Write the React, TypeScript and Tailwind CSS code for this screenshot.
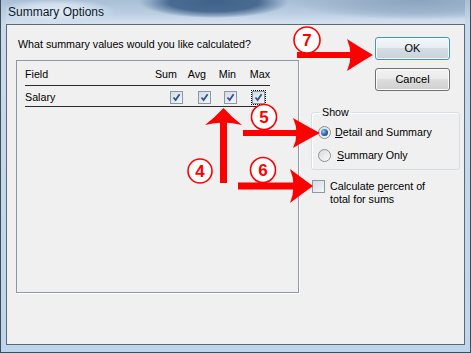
const font = "font-['Liberation_Sans',Arial,sans-serif]";

const Check = ({ checked = true, focused = false }: { checked?: boolean; focused?: boolean }) => (
  <span
    className={`flex h-[13px] w-[13px] shrink-0 items-center justify-center border border-[#8a98a8] bg-[linear-gradient(135deg,#d4dbe3,#f4f6f8)] ${
      focused ? 'outline outline-1 outline-dotted outline-offset-0 outline-black' : ''
    }`}
  >
    {checked && (
      <svg width="9" height="9" viewBox="0 0 9 9">
        <path d="M1.5 4.5 L3.6 7 L7.6 1.2" fill="none" stroke="#34538a" strokeWidth="1.8" />
      </svg>
    )}
  </span>
);

const Radio = ({ on = false }: { on?: boolean }) => (
  <span className="flex h-[13px] w-[13px] shrink-0 items-center justify-center rounded-full border border-[#8c8f94] bg-[linear-gradient(135deg,#d8dce0,#fafafa)]">
    {on && (
      <span className="h-[7px] w-[7px] rounded-full bg-[radial-gradient(circle_at_35%_35%,#8fc3f5,#1d59a8_60%,#0e3c7a)]" />
    )}
  </span>
);

const Button = ({ label, primary = false }: { label: string; primary?: boolean }) => (
  <button
    className={`h-[23px] w-[75px] rounded-[3px] border text-[11px] leading-none text-black shadow-[inset_0_0_0_1px_#fcfcfc] ${
      primary
        ? 'border-[#3c94d0] bg-[linear-gradient(180deg,#f3f7fa_0%,#e8eef3_45%,#d5dde4_50%,#c8d3dc_100%)]'
        : 'border-[#707070] bg-[linear-gradient(180deg,#f2f2f2_0%,#ebebeb_45%,#dddddd_50%,#cfcfcf_100%)]'
    }`}
  >
    {label}
  </button>
);

const arrowRight = (x1: number, bx: number, tx: number, cy: number, t: number, h: number) => {
  const mx = (bx + tx) / 2 + 2;
  return (
    <g fill="#ff0000">
      <rect x={x1} y={cy - t / 2} width={bx + 6 - x1} height={t} />
      <path
        d={`M${bx} ${cy - h} Q${mx} ${cy - h * 0.4} ${tx} ${cy} Q${mx} ${cy + h * 0.4} ${bx} ${cy + h} Q${bx + 7} ${cy} ${bx} ${cy - h} Z`}
      />
    </g>
  );
};

const Badge = ({ cx, cy, r, n }: { cx: number; cy: number; r: number; n: string }) => (
  <g>
    <circle cx={cx} cy={cy} r={r} fill="#fff" stroke="#ff0000" strokeWidth="1.6" />
    <text
      x={cx}
      y={cy + 6}
      textAnchor="middle"
      fontFamily="Liberation Sans, Arial, sans-serif"
      fontWeight="bold"
      fontSize="17"
      fill="#ff0000"
    >
      {n}
    </text>
  </g>
);

const App = () => {
  return (
    <div className={`relative h-[353px] w-[471px] overflow-hidden ${font}`}>
      <div className="flex h-full flex-col border-x border-b border-[#3e4d5c] bg-[linear-gradient(180deg,#a9bfd6_0px,#c9daeb_24px,#bed5ec_100%)] px-[5px] pb-[7px]">
        {/* title bar */}
        <div className="flex h-[24px] shrink-0 items-center bg-[radial-gradient(ellipse_60px_13px_at_50px_12px,#e2ebf5_0%,#d2dfec_60%,transparent_100%),radial-gradient(ellipse_75px_16px_at_208px_2px,#41628a_0%,#4a6b91_60%,#8aa5c2_85%,transparent_100%),radial-gradient(ellipse_130px_20px_at_410px_0px,#8aa3bf_0%,#9db4cc_60%,transparent_100%),linear-gradient(180deg,transparent_60%,#d3e0ee_100%)] pl-[2px]">
          <span className="text-[12px] leading-none text-[#0b1a2c]">Summary Options</span>
        </div>

        {/* client area */}
        <div className="flex flex-1 border border-[#5d6875] bg-[#f0f0f0] text-[10.7px] leading-[14px] text-black">
          <div className="ml-[9px] flex flex-col">
            <p className="mt-[12px] pl-[2px]">What summary values would you like calculated?</p>
            <div className="mt-[9px] h-[233px] w-[283px] border border-[#8d99a6] shadow-[1px_1px_0_#ffffff]">
              <div className="ml-[8px] w-[245px]">
                <div className="flex h-[25px] border-b border-[#2b2b2b] pt-[6px]">
                  <span className="w-[130px]">Field</span>
                  <span className="w-[33px]">Sum</span>
                  <span className="w-[31px]">Avg</span>
                  <span className="w-[31px]">Min</span>
                  <span>Max</span>
                </div>
                <div className="flex h-[21px] items-start border-b border-[#2b2b2b]">
                  <span className="mt-[4px] w-[145px]">Salary</span>
                  <span className="mt-[5px] flex">
                    <Check />
                    <span className="ml-[15px]">
                      <Check />
                    </span>
                    <span className="ml-[13px]">
                      <Check />
                    </span>
                    <span className="ml-[15px]">
                      <Check focused />
                    </span>
                  </span>
                </div>
              </div>
            </div>
          </div>

          <div className="ml-[12px] flex w-[149px] flex-col">
            <div className="mt-[12px] mr-[10px] flex flex-col items-end gap-[8px]">
              <Button label="OK" primary />
              <Button label="Cancel" />
            </div>
            <fieldset className="mt-[14px] rounded-[3px] border border-[#d5dfe5] pb-[6px] shadow-[inset_1px_1px_0_#fff]">
              <legend className="ml-[8px] px-[2px] leading-[14px]">Show</legend>
              <label className="mt-[5px] flex h-[16px] items-center gap-[4px] pl-[6px]">
                <Radio on />
                <span>
                  <u>D</u>etail and Summary
                </span>
              </label>
              <label className="mt-[7px] flex h-[16px] items-center gap-[6px] pl-[6px]">
                <Radio />
                <span>
                  <u>S</u>ummary Only
                </span>
              </label>
            </fieldset>
            <label className="mt-[10px] flex items-start gap-[5px] pl-[1px] leading-[13px]">
              <Check checked={false} />
              <span>
                Calculate <u>p</u>ercent of
                <br />
                total for sums
              </span>
            </label>
          </div>
        </div>
      </div>

      {/* annotations */}
      <svg className="pointer-events-none absolute left-0 top-0" width="471" height="353" viewBox="0 0 471 353">
        {arrowRight(297, 347, 373, 55, 6, 16)}
        {arrowRight(243, 293, 320, 133, 6, 15)}
        {arrowRight(238, 290, 313, 186, 7, 17)}
        <g fill="#ff0000">
          <rect x="220" y="119" width="7" height="64" />
          <path d="M205 125 Q214.5 118 223.5 108 Q232.5 118 242 125 Q223.5 120 205 125 Z" />
        </g>
        <Badge cx={307} cy={40} r={13} n="7" />
        <Badge cx={264} cy={117} r={12.5} n="5" />
        <Badge cx={200} cy={171} r={12} n="4" />
        <Badge cx={263} cy={170} r={12.5} n="6" />
      </svg>
    </div>
  );
};

export default App;
